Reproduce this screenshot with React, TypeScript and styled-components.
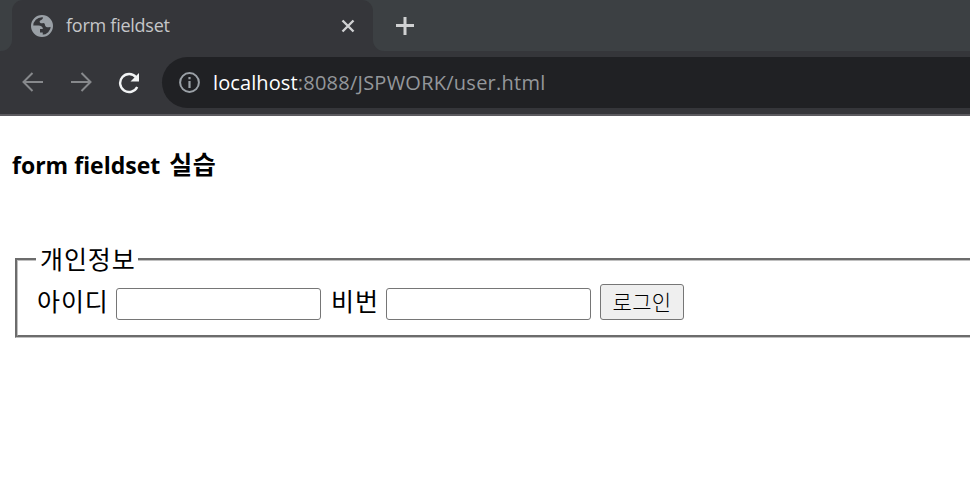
import React from "react";
import styled, { createGlobalStyle } from "styled-components";

const GlobalStyle = createGlobalStyle`
  * { box-sizing: border-box; }
  html, body { margin: 0; background: #fff; overflow: hidden; }
  body { font-family: "Open Sans", "Noto Sans CJK KR", sans-serif; color: #000; }
`;

const Window = styled.div`
  width: 970px;
  height: 484px;
  overflow: hidden;
  background: #fff;
`;

const TabStrip = styled.div`
  display: flex;
  height: 51px;
  background: #35363a;
`;

const StripEdge = styled.div`
  width: 12px;
  background: #3c4043;
  border-bottom-right-radius: 11px;
`;

const TabSlot = styled.div`
  width: 361px;
  background: #3c4043;
`;

const Tab = styled.div`
  display: flex;
  align-items: center;
  height: 51px;
  padding: 0 16px 0 19px;
  background: #35363a;
  border-radius: 11px 11px 0 0;
`;

const TabTitle = styled.span`
  flex: 1;
  margin: -2px 0 0 13px;
  font-size: 18px;
  line-height: 24px;
  letter-spacing: -0.25px;
  color: #c5c7c9;
`;

const StripRest = styled.div`
  flex: 1;
  padding: 16px 0 0 22px;
  background: #3c4043;
  border-bottom-left-radius: 11px;
`;

const Icon = styled.svg`
  display: block;
  flex: none;
`;

const Toolbar = styled.div`
  display: flex;
  align-items: center;
  height: 65px;
  padding: 0 0 1px 21px;
  background: #35363a;
  border-bottom: 2px solid #5b5a5f;
`;

const NavButtons = styled.div`
  display: flex;
  gap: 24px;
  width: 141px;
`;

const AddressBar = styled.div`
  display: flex;
  align-items: center;
  flex: 1;
  height: 51px;
  padding: 1px 0 0 16px;
  background: #202124;
  border-radius: 26px 0 0 26px;
`;

const Url = styled.span`
  margin-left: 12px;
  font-size: 20px;
  line-height: 28px;
  letter-spacing: 0.25px;
  color: #94979b;
  white-space: nowrap;
`;

const Host = styled.span`
  color: #fff;
  letter-spacing: 0.1px;
`;

const Page = styled.main`
  padding: 30px 0 0 12px;
`;

const Heading = styled.h4`
  margin: 0;
  height: 36px;
  font-size: 23px;
  line-height: 36px;
  font-weight: 700;
  white-space: nowrap;
`;

const HeadingHangul = styled.span`
  margin-left: 3px;
  font-size: 25px;
  letter-spacing: 0.6px;
`;

const UserFieldset = styled.fieldset`
  width: 990px;
  height: 97px;
  margin: 59px 0 0 3px;
  padding: 7px 0 0 19px;
  border: 3px groove #c0c0c0;
  min-width: 0;
`;

const Legend = styled.legend`
  width: 102px;
  margin-left: -1px;
  padding: 0 4px;
  font-size: 25px;
  line-height: 36px;
  letter-spacing: 0.9px;
  white-space: nowrap;
`;

const FormRow = styled.div`
  display: flex;
  align-items: flex-end;
  height: 36px;
`;

const Label = styled.label<{ $width: number }>`
  width: ${(p) => p.$width}px;
  margin-bottom: 1px;
  font-size: 25px;
  line-height: 36px;
  letter-spacing: 0.9px;
  white-space: nowrap;
`;

const TextInput = styled.input`
  width: 205px;
  height: 32px;
  margin: 0 10px 0 0;
  padding: 1px 4px;
  border: 1px solid #767676;
  border-radius: 3px;
  background: #fff;
  font: 20px "Noto Sans CJK KR", sans-serif;
`;

const LoginButton = styled.button`
  width: 84px;
  height: 36px;
  margin: 0 0 0 -1px;
  padding: 0 0 2px;
  border: 1px solid #767676;
  border-radius: 3px;
  background: #efefef;
  color: #000;
  font: 300 21px/32px "Noto Sans CJK KR", sans-serif;
  letter-spacing: 0.4px;
`;

function Globe() {
  return (
    <Icon width="22" height="22" viewBox="2 2 20 20">
      <circle cx="12" cy="12" r="9" fill="none" stroke="#9aa0a6" strokeWidth="2" />
      <path
        fill="#9aa0a6"
        d="M3.5 11.5h5.2c2.5 0 4.1 1.2 4.1 3.2h-2.6v3.2h2.5v3H10C6 20 3 16.5 3 12ZM13 3.2c.1 1.7-.5 3-2 3.6-1 .4-1.4 1-1 1.9.5 1 1.6 1 2.6.7 1.3-.3 2 .4 2.1 1.6.2 1.6 1.7 2.3 3.5 2.1l2.7-.4C21 7.5 17.5 3.2 13 3.2Z"
      />
    </Icon>
  );
}

function Arrow({ forward = false }: { forward?: boolean }) {
  return (
    <Icon width="24" height="24" viewBox="0 0 24 24" fill="none" stroke="#87898c" strokeWidth="2">
      <path d={forward ? "M2 12H21M12.5 3 21.5 12 12.5 21" : "M22 12H3M11.5 3 2.5 12 11.5 21"} />
    </Icon>
  );
}

export default function App() {
  return (
    <>
      <GlobalStyle />
      <Window>
        <TabStrip>
          <StripEdge />
          <TabSlot>
            <Tab>
              <Globe />
              <TabTitle>form fieldset</TabTitle>
              <Icon width="18" height="18" viewBox="0 0 18 18" stroke="#d0d1d2" strokeWidth="2.4">
                <path d="M3.5 3.5 14.5 14.5M14.5 3.5 3.5 14.5" />
              </Icon>
            </Tab>
          </TabSlot>
          <StripRest>
            <Icon width="20" height="20" viewBox="0 0 20 20" stroke="#d0d1d2" strokeWidth="3">
              <path d="M10 1V19M1 9.5H19" />
            </Icon>
          </StripRest>
        </TabStrip>
        <Toolbar>
          <NavButtons>
            <Arrow />
            <Arrow forward />
            <Icon width="24" height="24" viewBox="0 0 24 24">
              <path d="M19 7.2A9 9 0 1 0 20.2 17" fill="none" stroke="#f1f3f4" strokeWidth="2.4" />
              <path d="M22 3V11.5H13.5Z" fill="#f1f3f4" />
            </Icon>
          </NavButtons>
          <AddressBar>
            <Icon width="23" height="23" viewBox="0 0 23 23">
              <circle cx="11.5" cy="11.5" r="9.4" fill="none" stroke="#9aa0a6" strokeWidth="2" />
              <path d="M11.5 6V8.3M11.5 10V17" stroke="#9aa0a6" strokeWidth="2.2" />
            </Icon>
            <Url>
              <Host>localhost</Host>:8088/JSPWORK/user.html
            </Url>
          </AddressBar>
        </Toolbar>
        <Page>
          <Heading>
            form fieldset <HeadingHangul>실습</HeadingHangul>
          </Heading>
          <UserFieldset>
            <Legend>개인정보</Legend>
            <FormRow>
              <Label htmlFor="user-id" $width={79}>아이디</Label>
              <TextInput id="user-id" type="text" />
              <Label htmlFor="user-pw" $width={55}>비번</Label>
              <TextInput id="user-pw" type="password" />
              <LoginButton type="button">로그인</LoginButton>
            </FormRow>
          </UserFieldset>
        </Page>
      </Window>
    </>
  );
}
